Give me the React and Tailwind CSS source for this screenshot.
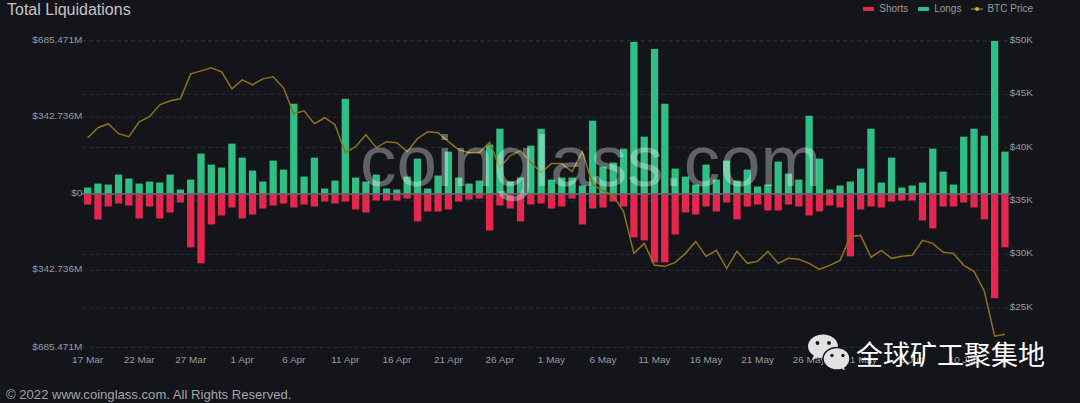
const longs = [188,184,185,175,179,184,182,183,175,190,180,154,165,168,144,158,171,182,161,170,104,177,158,189,181,99,178,182,175,189,190,177,159,189,176,152,178,184,181,145,129,182,178,146,129,180,178,178,186,121,167,163,149,42,137,49,104,169,177,185,165,180,161,181,170,187,185,162,174,180,116,159,190,186,182,169,129,183,158,188,186,183,149,172,185,137,129,136,41,152]
const shorts = [205,220,207,204,206,219,207,219,213,203,248,264,225,216,208,219,215,209,206,204,208,205,207,202,204,202,210,213,201,201,201,199,222,212,212,210,202,200,199,231,206,209,222,205,204,209,207,199,225,209,208,202,207,238,241,263,263,235,213,215,207,212,203,220,207,205,211,211,205,207,216,212,206,208,257,210,207,208,202,201,201,221,229,207,207,203,208,220,299,248]
const price = [138,128,124,134,137,122,117,105,101,99,74,71,68,72,89,80,85,79,77,88,114,111,124,118,125,153,147,135,148,142,143,152,139,132,133,142,150,153,153,143,168,156,151,163,173,164,164,172,152,185,191,196,212,254,244,266,267,263,254,242,257,251,269,252,264,262,252,264,259,260,264,270,266,261,237,236,258,251,259,257,256,241,244,253,254,266,272,292,337,335]
const dates = ['17 Mar','22 Mar','27 Mar','1 Apr','6 Apr','11 Apr','16 Apr','21 Apr','26 Apr','1 May','6 May','11 May','16 May','21 May','26 May','31 May','5 Jun','10 Jun']
const leftAxis = [['$685.471M',41],['$342.736M',117.5],['$0',194.5],['$342.736M',271],['$685.471M',348.5]]
const rightAxis = [['$50K',41],['$45K',94.5],['$40K',148],['$35K',201.5],['$30K',255],['$25K',309]]

const barX = (i) => 86.4 + i * 10.335

function Chart() {
  return (
    <svg viewBox="0 20 1080 350" width="1080" height="350" className="block" fontFamily="'Liberation Sans', Arial, sans-serif">
      {leftAxis.concat(rightAxis).map(([label, y], i) => (
        <line key={i} x1="81" x2="1012" y1={y} y2={y} stroke="#2a2b30" strokeWidth="1" strokeDasharray="4 3" />
      ))}
      {longs.map((top, i) => (
        <rect key={i} x={barX(i) - 3.65} y={top} width="7.3" height={194 - top} fill="#2fbf85" />
      ))}
      {shorts.map((bottom, i) => (
        <rect key={i} x={barX(i) - 3.65} y="195" width="7.3" height={bottom - 195} fill="#e5274f" />
      ))}
      <line x1="81" x2="1012" y1="194.5" y2="194.5" stroke="#6e7079" strokeWidth="1.5" />
      <polyline
        points={price.map((y, i) => `${barX(i)},${y}`).join(' ')}
        fill="none"
        stroke="#8f7214"
        strokeWidth="1.5"
      />
      <text x="359.500" y="186" fontSize="73" fill="#ffffff" fillOpacity="0.33">coinglass.com</text>
      {leftAxis.map(([label, y], i) => (
        <text key={i} x="81" y={y + 2} textAnchor="end" fontSize="10" fill="#99999c">{label}</text>
      ))}
      {rightAxis.map(([label, y]) => (
        <text key={label} x="1011" y={y + 2} fontSize="10" fill="#99999c">{label}</text>
      ))}
      {dates.map((d, i) => (
        <text key={d} x={barX(i * 5)} y="363.500" textAnchor="middle" fontSize="10" fill="#99999c">{d}</text>
      ))}
    </svg>
  )
}

function Legend() {
  return (
    <div className="flex items-center text-[10px] text-[#99999c] mt-[1px] mr-[47px]">
      <span className="w-[11px] h-[4px] rounded-[1px] bg-[#e5274f] mr-[5px]" />
      <span className="mr-[10px]">Shorts</span>
      <span className="w-[11px] h-[4px] rounded-[1px] bg-[#2fbf85] mr-[5px]" />
      <span className="mr-[10px]">Longs</span>
      <svg width="12" height="6" viewBox="0 0 12 6" className="mr-[4px]">
        <line x1="0" x2="12" y1="3" y2="3" stroke="#c79a12" strokeWidth="1" />
        <circle cx="6" cy="3" r="2" fill="#e0ae14" />
      </svg>
      <span>BTC Price</span>
    </div>
  )
}

function WeChatMark() {
  return (
    <div className="absolute left-[806px] top-[333px] flex items-center">
      <svg width="46" height="40" viewBox="0 0 46 40">
        <path d="M17 1.500C8.700 1.500 2 6.800 2 13.300c0 3.800 2.200 7 5.700 9.200L6.400 27l5-2.600c1.700.5 3.600.8 5.600.8 8.300 0 15-5.300 15-11.900S25.300 1.500 17 1.500z" fill="#e2e2e2" />
        <path d="M31 14.500c-7.500 0-14 5-14 11.300S23.500 37 31 37c1.600 0 3-.2 4.400-.6L40 39l-1-4.200c3-2.100 5-5.200 5-9C44 19.500 38.500 14.500 31 14.500z" fill="#e2e2e2" stroke="#14151a" strokeWidth="1.500" />
        <circle cx="11.500" cy="10" r="1.900" fill="#14151a" />
        <circle cx="23" cy="10" r="1.900" fill="#14151a" />
        <circle cx="26" cy="22.500" r="1.700" fill="#14151a" />
        <circle cx="37" cy="22.500" r="1.700" fill="#14151a" />
      </svg>
      <span className="ml-[4px] text-[27px] leading-none text-white [font-family:'Noto_Sans_CJK_SC',sans-serif]">全球矿工聚集地</span>
    </div>
  )
}

export default function App() {
  return (
    <div className="relative w-[1080px] h-[403px] overflow-hidden flex flex-col bg-[#14151a] [font-family:'Liberation_Sans',Arial,sans-serif]">
      <div className="flex items-start justify-between h-[20px] pl-[7px]">
        <h1 className="text-[16px] leading-[17px] mt-[1px] font-normal text-[#c4c4c6]">Total Liquidations</h1>
        <Legend />
      </div>
      <Chart />
      <div className="pl-[6px] mt-[18px] text-[13.1px] leading-[16px] text-[#a4a4a6]">© 2022 www.coinglass.com. All Rights Reserved.</div>
      <WeChatMark />
    </div>
  )
}
